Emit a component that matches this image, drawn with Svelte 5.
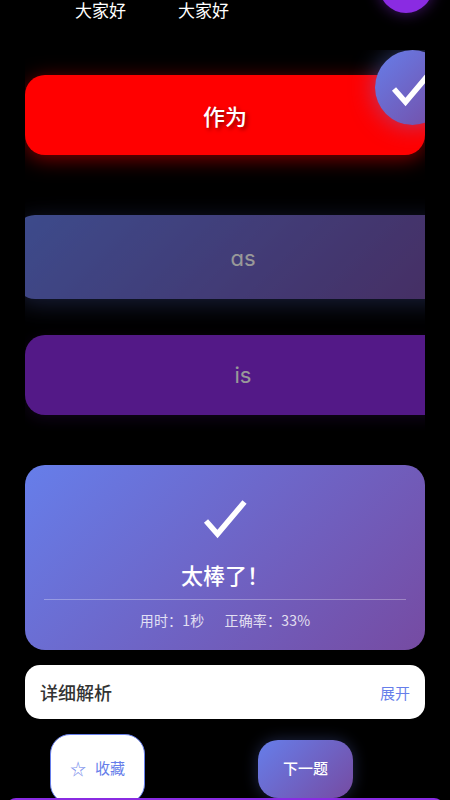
<script>
	let words = ["大家好", "大家好"];
	let options = [
		{ text: "作为", kind: "wrong" },
		{ text: "as", kind: "right" },
		{ text: "is", kind: "other" },
	];
</script>

<div class="page">
	<div class="top-dot"></div>

	<div class="words">
		{#each words as word}
			<span>{word}</span>
		{/each}
	</div>

	<div class="options">
		{#each options as option}
			<div class="option {option.kind}"><span>{option.text}</span></div>
		{/each}
		<div class="badge">
			<svg width="44" height="40" viewBox="0 0 44 40">
				<polyline points="3,21 14.5,34 41.5,2" />
			</svg>
		</div>
	</div>

	<div class="result">
		<svg width="44" height="40" viewBox="0 0 44 40">
			<polyline points="3,21 14.5,34 41.5,2" />
		</svg>
		<div class="result-title">太棒了！</div>
		<div class="result-stats">
			<span>用时：1秒</span>
			<span>正确率：33%</span>
		</div>
	</div>

	<div class="analysis">
		<span class="analysis-title">详细解析</span>
		<span class="analysis-toggle">展开</span>
	</div>

	<div class="actions">
		<button class="save"><span class="star">☆</span>收藏</button>
		<button class="next">下一题</button>
	</div>

	<div class="bottom-bar"></div>
</div>

<style>
	:global(body) {
		background: #000;
	}

	.page {
		position: relative;
		width: 450px;
		height: 800px;
		overflow: hidden;
		background: #000;
		font-family: "Noto Sans CJK SC", "Noto Sans", sans-serif;
		color: #fff;
	}

	.top-dot {
		position: absolute;
		left: 379px;
		top: -41px;
		width: 54px;
		height: 54px;
		border-radius: 50%;
		background: #8a2be2;
		box-shadow: 0 0 15px rgba(138, 43, 226, 0.5);
	}

	.words {
		display: flex;
		gap: 52px;
		height: 20px;
		padding-left: 75px;
		font-size: 17px;
		line-height: 20px;
	}

	.options {
		position: relative;
		width: 400px;
		height: 390px;
		margin: 30px 0 25px 25px;
		padding-top: 25px;
		box-sizing: border-box;
		overflow: hidden;
	}

	.option {
		display: flex;
		align-items: center;
		justify-content: center;
		height: 80px;
		width: 436px;
		border-radius: 20px;
		font-size: 22px;
	}

	.wrong {
		width: 400px;
		background: #ff0000;
		box-shadow: 0 4px 20px rgba(255, 0, 0, 0.5);
		font-weight: 500;
		text-shadow: 2px 2px 4px rgba(0, 0, 0, 0.5);
	}

	.right {
		width: 456px;
		height: 84px;
		margin: 60px 0 36px -10px;
		padding-top: 2px;
		box-sizing: border-box;
		background: linear-gradient(135deg, #667eea, #764ba2);
		box-shadow: 0 5px 25px rgba(102, 126, 234, 0.4);
		opacity: 0.6;
	}

	.other {
		background: #8a2be2;
		box-shadow: 0 4px 15px rgba(138, 43, 226, 0.2);
		opacity: 0.6;
	}

	.right span,
	.other span {
		font-family: Inter, sans-serif;
		font-feature-settings: "cv11";
		font-weight: 400;
	}

	.badge {
		position: absolute;
		left: 350px;
		top: 0;
		width: 75px;
		height: 75px;
		border-radius: 50%;
		display: flex;
		align-items: center;
		justify-content: center;
		background: linear-gradient(135deg, #667eea, #764ba2);
		box-shadow: 0 0 25px rgba(102, 126, 234, 0.5);
	}

	svg {
		flex: none;
		display: block;
	}

	polyline {
		fill: none;
		stroke: #fff;
		stroke-width: 5.5;
	}

	.result {
		display: flex;
		flex-direction: column;
		align-items: center;
		height: 185px;
		margin: 0 25px;
		padding: 35px 19px 0;
		box-sizing: border-box;
		border-radius: 20px;
		background: linear-gradient(135deg, #667eea, #764ba2);
	}

	.result-title {
		width: 100%;
		margin-top: 17px;
		padding-bottom: 8px;
		border-bottom: 1px solid rgba(255, 255, 255, 0.3);
		text-align: center;
		font-size: 22px;
		line-height: 34px;
		font-weight: 500;
	}

	.result-stats {
		display: flex;
		gap: 20px;
		margin-top: 10px;
		font-size: 14px;
		letter-spacing: 0.2px;
		line-height: 20px;
		opacity: 0.8;
	}

	.analysis {
		display: flex;
		align-items: center;
		justify-content: space-between;
		height: 54px;
		margin: 15px 25px 0;
		padding: 0 15px;
		border-radius: 15px;
		background: #fff;
	}

	.analysis-title {
		font-size: 18px;
		font-weight: 500;
		color: #333;
	}

	.analysis-toggle {
		font-size: 15px;
		color: #667eea;
	}

	.actions {
		display: flex;
		align-items: flex-start;
		justify-content: space-between;
		margin-top: 15px;
		padding: 0 97px 0 50px;
	}

	button {
		display: flex;
		align-items: center;
		justify-content: center;
		width: 95px;
		height: 70px;
		padding: 0 0 3px;
		box-sizing: border-box;
		border-radius: 20px;
		font-family: inherit;
		font-size: 15px;
	}

	.save {
		border: 1px solid #667eea;
		background: #fff;
		color: #667eea;
	}

	.star {
		margin-right: 9px;
		font-size: 16px;
		opacity: 0.85;
	}

	.next {
		margin-top: 6px;
		height: 58px;
		padding-bottom: 3px;
		border: none;
		background: linear-gradient(135deg, #667eea, #764ba2);
		box-shadow: 0 0 15px rgba(102, 126, 234, 0.3);
		color: #fff;
		font-weight: 500;
	}

	.bottom-bar {
		position: absolute;
		left: 6px;
		right: 6px;
		bottom: -18px;
		height: 20px;
		border-radius: 10px;
		background: #8a2be2;
	}
</style>
